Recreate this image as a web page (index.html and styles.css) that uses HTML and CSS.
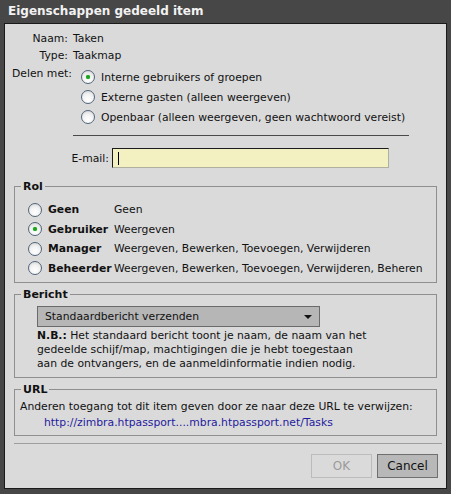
FILE: index.html
```html
<!DOCTYPE html>
<html>
<head>
<meta charset="utf-8">
<link rel="stylesheet" href="styles.css">
</head>
<body>
<div class="dialog">
  <div class="title">Eigenschappen gedeeld item</div>
  <div class="panel">
    <div class="info-row"><span class="lbl">Naam:</span><span>Taken</span></div>
    <div class="info-row"><span class="lbl">Type:</span><span>Taakmap</span></div>
    <div class="delen">
      <span class="delen-lbl">Delen met:</span>
      <div class="options">
        <div class="opt"><span class="radio on"></span>Interne gebruikers of groepen</div>
        <div class="opt"><span class="radio"></span>Externe gasten (alleen weergeven)</div>
        <div class="opt"><span class="radio"></span>Openbaar (alleen weergeven, geen wachtwoord vereist)</div>
      </div>
    </div>
    <div class="rule"></div>
    <div class="email-row">
      <span class="email-lbl">E-mail:</span>
      <div class="input"><span class="caret"></span></div>
    </div>

    <fieldset class="group rol">
      <legend>Rol</legend>
      <div class="body">
        <div class="rol-row"><span class="radio"></span><b>Geen</b><span>Geen</span></div>
        <div class="rol-row"><span class="radio on"></span><b>Gebruiker</b><span>Weergeven</span></div>
        <div class="rol-row"><span class="radio"></span><b>Manager</b><span>Weergeven, Bewerken, Toevoegen, Verwijderen</span></div>
        <div class="rol-row"><span class="radio"></span><b>Beheerder</b><span>Weergeven, Bewerken, Toevoegen, Verwijderen, Beheren</span></div>
      </div>
    </fieldset>

    <fieldset class="group bericht">
      <legend>Bericht</legend>
      <div class="body">
        <div class="select"><span>Standaardbericht verzenden</span><span class="arrow"></span></div>
        <p class="note"><b>N.B.:</b> Het standaard bericht toont je naam, de naam van het<br>gedeelde schijf/map, machtigingen die je hebt toegestaan<br>aan de ontvangers, en de aanmeldinformatie indien nodig.</p>
      </div>
    </fieldset>

    <fieldset class="group url">
      <legend>URL</legend>
      <div class="body">
        <div class="url-text">Anderen toegang tot dit item geven door ze naar deze URL te verwijzen:</div>
        <div class="url-link">http://zimbra.htpassport....mbra.htpassport.net/Tasks</div>
      </div>
    </fieldset>

    <div class="sep"></div>
    <div class="buttons">
      <div class="btn disabled">OK</div>
      <div class="btn">Cancel</div>
    </div>
  </div>
</div>
</body>
</html>
```

FILE: styles.css
```css
html, body {
  margin: 0;
  padding: 0;
  background: #474747;
}
body {
  font-family: "DejaVu Sans", Verdana, sans-serif;
  font-size: 10.8px;
  color: #111;
}
.dialog {
  width: 451px;
  height: 494px;
  box-sizing: border-box;
  padding: 0 4px;
}
.title {
  height: 23px;
  line-height: 23px;
  padding-left: 4px;
  color: #f2f2f2;
  font-weight: bold;
  font-size: 12px;
}
.panel {
  background: #dadada;
  border: 1px solid #1a1a1a;
  height: 464px;
  display: flex;
  flex-direction: column;
}
.info-row {
  display: flex;
  gap: 5px;
  height: 17px;
  line-height: 17px;
}
.info-row:first-child { margin-top: 6px; }
.info-row .lbl {
  width: 63px;
  text-align: right;
}
.delen {
  display: flex;
  margin-top: 3px;
}
.delen-lbl {
  width: 76px;
  padding-left: 7px;
  box-sizing: border-box;
  line-height: 14px;
}
.options {
  display: flex;
  flex-direction: column;
}
.opt {
  display: flex;
  align-items: center;
  height: 20px;
  gap: 6px;
}
.radio {
  width: 12px;
  height: 12px;
  border-radius: 50%;
  border: 1px solid #51647a;
  background: radial-gradient(circle at 50% 70%, #ffffff 0%, #f2f2f2 50%, #cfcfcf 100%);
  display: inline-flex;
  align-items: center;
  justify-content: center;
  flex: none;
}
.radio.on::after {
  content: "";
  width: 4px;
  height: 4px;
  border-radius: 50%;
  background: #1fa21f;
  box-shadow: 0 0 1px #2bbd2b;
}
.rule {
  margin: 8px 37px 0 68px;
  height: 1px;
  background: #4a4a4a;
}
.email-row {
  display: flex;
  align-items: center;
  margin-top: 12px;
}
.email-lbl {
  width: 104px;
  text-align: right;
  margin-right: 3px;
}
.input {
  width: 270px;
  height: 18px;
  background: #f3f0c2;
  border: 1px solid #b0b0a0;
  border-top-color: #1c1c1c;
  border-left-color: #1c1c1c;
  display: flex;
  align-items: center;
  padding-left: 5px;
}
.caret {
  width: 1px;
  height: 13px;
  background: #000;
}
.group {
  margin: 0 9px;
  padding: 0;
  border: 1px solid #8f8f8f;
  min-width: 0;
}
.group legend {
  font-weight: bold;
  padding: 0 2px;
  margin-left: 6px;
  font-size: 11px;
  line-height: 13px;
}
.rol {
  margin-top: 12px;
}
.rol .body {
  padding: 7px 0 4px 13px;
}
.rol-row {
  display: flex;
  align-items: center;
  height: 19.5px;
  white-space: nowrap;
}
.rol-row b {
  width: 66px;
  margin-left: 6px;
  flex: none;
}
.bericht {
  margin-top: 5px;
}
.bericht .body {
  padding: 5px 0 6px 22px;
}
.select {
  width: 283px;
  height: 21px;
  background: #b6b6b6;
  border: 1px solid #6a6a6a;
  display: flex;
  align-items: center;
  justify-content: space-between;
  padding: 0 7px;
  box-sizing: border-box;
}
.arrow {
  width: 0;
  height: 0;
  border-left: 4px solid transparent;
  border-right: 4px solid transparent;
  border-top: 4px solid #111;
}
.note {
  margin: 2px 0 0 0;
  line-height: 14px;
  white-space: nowrap;
}
.url {
  margin-top: 5px;
}
.url .body {
  padding: 3px 0 4px 5px;
}
.url-text {
  line-height: 16px;
}
.url-link {
  line-height: 16px;
  padding-left: 24px;
  color: #251a9e;
}
.sep {
  margin: 7px 4px 0 9px;
  height: 1px;
  background: #9e9e9e;
}
.buttons {
  display: flex;
  justify-content: flex-end;
  gap: 5px;
  margin: 10px 8px 0 0;
}
.btn {
  width: 59px;
  height: 22px;
  line-height: 22px;
  text-align: center;
  border: 1px solid #6f6f6f;
  background: #b8b8b8;
  font-size: 12px;
  color: #111;
}
.btn.disabled {
  background: transparent;
  border-color: #bcbcbc;
  color: #9a9a9a;
}
```
